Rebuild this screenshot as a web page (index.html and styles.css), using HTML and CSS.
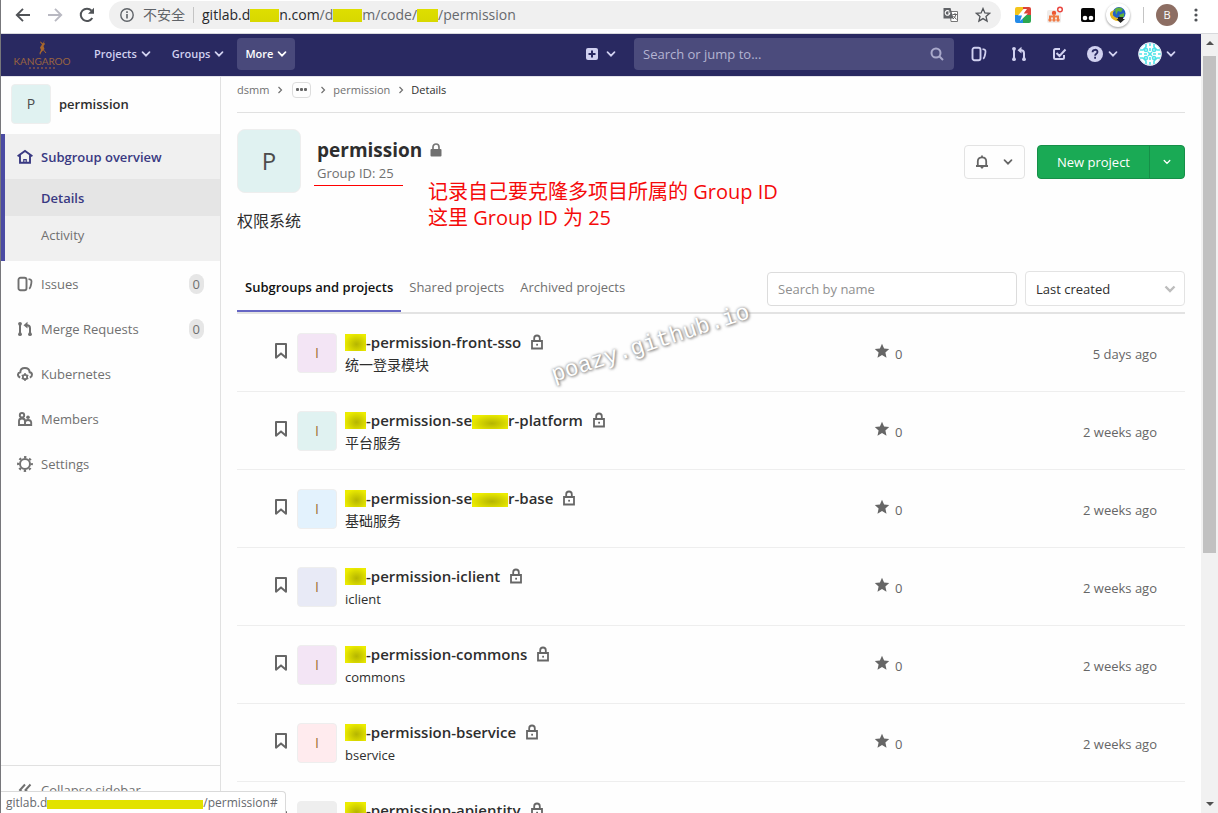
FILE: index.html
```html
<!DOCTYPE html>
<html lang="en">
<head>
<meta charset="utf-8">
<title>permission</title>
<link rel="stylesheet" href="styles.css">
</head>
<body>
<svg class="defs" aria-hidden="true">
  <symbol id="chev" viewBox="0 0 10 10"><path d="M1.5 3.2 5 6.7l3.5-3.5" fill="none" stroke="currentColor" stroke-width="1.7" stroke-linecap="round"/></symbol>
  <symbol id="sep" viewBox="0 0 8 8"><path d="M2.5 1l3 3-3 3" fill="none" stroke="currentColor" stroke-width="1.2"/></symbol>
  <symbol id="issues" viewBox="0 0 16 16"><rect x="1.5" y="1.8" width="8" height="12.4" rx="2" fill="none" stroke="currentColor" stroke-width="1.9"/><path d="M11.5 3.2c3 .3 3.4 1 2.8 4.2-.5 3-.9 4.6-2.2 5.4" fill="none" stroke="currentColor" stroke-width="1.8"/></symbol>
  <symbol id="merge" viewBox="0 0 16 16"><path d="M3 4v8M13 12V7.2Q13 4.2 10 4.200H8.500" fill="none" stroke="currentColor" stroke-width="2"/><circle cx="3" cy="2.800" r="1.900" fill="currentColor"/><circle cx="3" cy="13.200" r="1.900" fill="currentColor"/><circle cx="13" cy="13.200" r="1.900" fill="currentColor"/><path d="M6.500 4.200 10.500.800v6.800z" fill="currentColor"/></symbol>
  <symbol id="lock" viewBox="0 0 16 16"><path d="M3 7h10v7.500H3zM5.200 7V4.300a2.800 2.800 0 0 1 5.600 0V7" fill="none" stroke="currentColor" stroke-width="1.800"/><rect x="7.200" y="9.800" width="1.800" height="1.800" fill="currentColor"/></symbol>
  <symbol id="mark" viewBox="0 0 16 16"><path d="M3 1.100h10v13.600L8 10.400l-5 4.300z" fill="none" stroke="currentColor" stroke-width="2" stroke-linejoin="round"/></symbol>
  <symbol id="star" viewBox="0 0 16 16"><path d="M8 .8l2.100 4.700 5.100.500-3.800 3.500 1.100 5.200L8 12.100l-4.500 2.600 1.100-5.200L.8 6l5.100-.5z" fill="currentColor"/></symbol>
</svg>

<div class="browser">
  <header class="chrome">
    <button class="cbtn" aria-label="Back"><svg width="16" height="16" viewBox="0 0 16 16"><path d="M15 8H2M8 1.800 1.800 8 8 14.200" fill="none" stroke="#505357" stroke-width="1.900"/></svg></button>
    <button class="cbtn" aria-label="Forward"><svg width="16" height="16" viewBox="0 0 16 16"><path d="M1 8h13M8 1.800 14.200 8 8 14.200" fill="none" stroke="#b9b9c2" stroke-width="1.900"/></svg></button>
    <button class="cbtn" aria-label="Reload"><svg width="16" height="16" viewBox="0 0 16 16"><path d="M13.300 11A6.200 6.200 0 1 1 12.600 3.700" fill="none" stroke="#505357" stroke-width="2"/><path d="M15 .8v6H9z" fill="#505357"/></svg></button>
    <div class="address">
      <svg width="14" height="14" viewBox="0 0 14 14"><circle cx="7" cy="7" r="6.200" fill="none" stroke="#5f6368" stroke-width="1.400"/><path d="M7 6v4.500M7 3.300v1.600" stroke="#5f6368" stroke-width="1.600"/></svg>
      <span class="insecure">不安全</span><i class="divider"></i>
      <span class="url"><b>gitlab.d<i class="redact w28"></i>n.com</b>/d<i class="redact w28"></i>m/code/<i class="redact w20"></i>/permission</span>
      <button class="cbtn" aria-label="Translate"><svg width="16" height="16" viewBox="0 0 16 16"><path d="M7 4.500h7.500v10H8z" fill="#fff" stroke="#777" /><path d="M.5 1h7l3 10.500H.5z" fill="#606266"/><path d="M6.300 4.500A2.300 2.300 0 1 0 6.800 6H5" fill="none" stroke="#fff" stroke-width="1.100"/><path d="M9.500 7.500h4.500M12 6v1.500M13 7.500q-.8 3-3 4.500M10.500 9l3 3.500" fill="none" stroke="#666"/></svg></button>
      <button class="cbtn" aria-label="Bookmark"><svg width="16" height="16" viewBox="0 0 16 16"><path d="M8 1.500l1.900 4.400 4.700.4-3.600 3.100 1.100 4.700L8 11.600l-4.100 2.500L5 9.400 1.400 6.300l4.700-.4z" fill="none" stroke="#54575b" stroke-width="1.300"/></svg></button>
    </div>
    <div class="extensions">
      <svg width="16" height="16" viewBox="0 0 16 16"><path d="M2 0h6v8H0V2q0-2 2-2z" fill="#f4c51c"/><path d="M8 0h6q2 0 2 2v6H8z" fill="#dd4338"/><path d="M0 8h8v8H2q-2 0-2-2z" fill="#258be8"/><path d="M8 8h8v6q0 2-2 2H8z" fill="#2ca750"/><path d="M8.500 2 3 8.500h4L5 14l8-7.500H8.700L12 2z" fill="#fff"/></svg>
      <svg width="18" height="18" viewBox="0 0 18 18"><rect y="4" width="14" height="13" rx="2" fill="#f0ecea"/><circle cx="7" cy="7" r="2.200" fill="#ec5633"/><path d="M7 8v6M3 14v-3.500h8V14" stroke="#f07a45" stroke-width="2" fill="none"/><circle cx="3" cy="14" r="1.700" fill="#f07a45"/><circle cx="7" cy="14" r="1.700" fill="#f07a45"/><circle cx="11" cy="14" r="1.700" fill="#f07a45"/><circle cx="13" cy="3.500" r="2.300" fill="#fff" stroke="#ea4640" stroke-width="1.500"/></svg>
      <svg width="14" height="14" viewBox="0 0 14 14"><rect width="14" height="14" rx="2" fill="#050505"/><circle cx="4" cy="10" r="2.300" fill="#fff"/><circle cx="10" cy="10" r="2.300" fill="#fff"/></svg>
      <svg class="globe" width="26" height="26" viewBox="0 0 26 26"><circle cx="13" cy="13" r="12" fill="#fff"/><circle cx="14" cy="11.500" r="6.500" fill="#235fc6"/><path d="M10 7q4-3 8 0l-2 3-3-1-2 4zM14 13l5-2q1 4-3 6z" fill="#61b33b"/><path d="M5 13q-1-4 5-5-5 4 0 7 3 2 5 0l1 4q-9 1-11-6z" fill="#e6b722"/><path d="M13 15h5v2h2l-4.500 4-4-4H13z" fill="#222"/></svg>
      <i class="divider"></i><span class="profile">B</span>
      <button class="cbtn" aria-label="Menu"><svg width="4" height="14" viewBox="0 0 4 14"><circle cx="2" cy="2" r="1.600" fill="#505357"/><circle cx="2" cy="7" r="1.600" fill="#505357"/><circle cx="2" cy="12" r="1.600" fill="#505357"/></svg></button>
    </div>
  </header>

  <div class="viewport">
    <div class="page">
      <nav class="navbar">
        <a class="logo" href="#" aria-label="Kangaroo">
          <svg width="10" height="15" viewBox="0 0 10 15"><path d="M7.500 0 7 2.500 8 4 6.500 6l1 3-3 3L3 15l-.5-2L4 10 3 7.500l2-3L3 2l.5-.5L6 3.500z" fill="#a8672c"/><path d="M6.500 10 9 13" stroke="#a8672c" stroke-width="1" fill="none"/></svg>
          <span>KANGAROO</span><i></i>
        </a>
        <button class="navitem">Projects <svg class="c10"><use href="#chev"/></svg></button>
        <button class="navitem">Groups <svg class="c10"><use href="#chev"/></svg></button>
        <button class="navitem on">More <svg class="c10"><use href="#chev"/></svg></button>
        <div class="navright">
          <button class="navicon plus" aria-label="New"><svg width="12" height="12" viewBox="0 0 12 12"><rect width="12" height="12" rx="2" fill="currentColor"/><path d="M6 2.500v7M2.500 6h7" stroke="#292961" stroke-width="2"/></svg><svg class="c10"><use href="#chev"/></svg></button>
          <label class="jump"><input type="text" placeholder="Search or jump to..." aria-label="Search or jump to"><svg width="14" height="14" viewBox="0 0 14 14"><circle cx="6" cy="6" r="4.500" fill="none" stroke="currentColor" stroke-width="2"/><path d="M9.500 9.500l3.500 3.500" stroke="currentColor" stroke-width="2"/></svg></label>
          <button class="navicon" aria-label="Issues"><svg class="c16"><use href="#issues"/></svg></button>
          <button class="navicon" aria-label="Merge requests"><svg class="c16"><use href="#merge"/></svg></button>
          <button class="navicon" aria-label="To-do"><svg class="c16" viewBox="0 0 16 16"><path d="M9 3H4.500Q3 3 3 4.500v7Q3 13 4.500 13h7q1.500 0 1.500-1.500V9M5.500 7l3 3 6-6.500" fill="none" stroke="currentColor" stroke-width="2"/></svg></button>
          <button class="navicon help" aria-label="Help"><svg class="c16" viewBox="0 0 16 16"><circle cx="8" cy="8" r="8" fill="currentColor"/><path d="M5.500 6.200C5.700 3 10.500 3 10.500 6c0 1.800-2.400 1.700-2.400 3.700M8.100 10.800v2" fill="none" stroke="#292961" stroke-width="1.800"/></svg><svg class="c10"><use href="#chev"/></svg></button>
          <button class="navicon user" aria-label="Account"><svg width="24" height="24" viewBox="0 0 24 24"><circle cx="12" cy="12" r="11.500" fill="#fff"/><g fill="none" stroke="#4fe3e8" stroke-width="1.600"><path d="M8 2v3l-3 3H2M16 2v3l3 3h3M8 22v-3l-3-3H2M16 22v-3l3-3h3M12 1v3M12 20v3M1 12h3M20 12h3"/><circle cx="8" cy="8" r="1.500"/><circle cx="16" cy="8" r="1.500"/><circle cx="8" cy="16" r="1.500"/><circle cx="16" cy="16" r="1.500"/><path d="M12 6v3M12 15v3M6 12h3M15 12h3M10 10l4 4M14 10l-4 4"/></g><circle cx="12" cy="12" r="11.300" fill="none" stroke="#d6e4f2"/></svg><svg class="c10"><use href="#chev"/></svg></button>
        </div>
      </nav>

      <div class="body">
        <aside class="sidebar">
          <a class="context" href="#"><span class="avatar teal">P</span><strong>permission</strong></a>
          <div class="current">
            <a class="side top" href="#"><svg class="c16" viewBox="0 0 16 16"><path d="M.6 7.200 8 2l7.400 5.200M3 6v7.800h10V6" fill="none" stroke="currentColor" stroke-width="1.900"/><path d="M6.800 14v-3.300h2.400V14" fill="none" stroke="currentColor" stroke-width="1.200"/></svg>Subgroup overview</a>
            <a class="sub on" href="#">Details</a>
            <a class="sub" href="#">Activity</a>
          </div>
          <a class="side" href="#"><svg class="c16"><use href="#issues"/></svg>Issues<span class="count">0</span></a>
          <a class="side" href="#"><svg class="c16"><use href="#merge"/></svg>Merge Requests<span class="count">0</span></a>
          <a class="side" href="#"><svg class="c16" viewBox="0 0 16 16"><path d="M3.200 11.500C.2 10.500.2 6.800 3.300 6.300 3.500.8 12 .6 12.700 6.300c3 .3 3 4.200.1 5.200" fill="none" stroke="currentColor" stroke-width="2"/><circle cx="8" cy="11" r="2.200" fill="none" stroke="currentColor" stroke-width="1.800"/><path d="M8 7v2M8 13v2M4.700 9l1.500 1M9.800 12l1.500 1M4.700 13l1.500-1M9.800 10l1.500-1" stroke="currentColor" stroke-width="1.500"/></svg>Kubernetes</a>
          <a class="side" href="#"><svg class="c16" viewBox="0 0 16 16"><path d="M2 14V10q0-2.500 3-2.500T8 10v4zM8 14v-2.500Q8 9 11 9t3.200 2.500V14z" fill="none" stroke="currentColor" stroke-width="1.900"/><circle cx="5" cy="4.200" r="2.200" fill="none" stroke="currentColor" stroke-width="1.900"/><circle cx="11" cy="6.200" r="1.800" fill="currentColor"/></svg>Members</a>
          <a class="side" href="#"><svg class="c16" viewBox="0 0 16 16"><circle cx="8" cy="8" r="5" fill="none" stroke="currentColor" stroke-width="2"/><circle cx="8" cy="8" r="6.900" fill="none" stroke="currentColor" stroke-width="2" stroke-dasharray="2.400 3.020" stroke-dashoffset="1.200"/></svg>Settings</a>
          <button class="collapse"><svg class="c16" viewBox="0 0 16 16"><path d="M8 2.500 3 8l5 5.500M13.500 2.500 8.500 8l5 5.500" fill="none" stroke="currentColor" stroke-width="2"/></svg>Collapse sidebar</button>
        </aside>

        <main class="main">
          <nav class="crumbs"><a href="#">dsmm</a><svg class="c8"><use href="#sep"/></svg><button class="dots" aria-label="More levels"><i></i><i></i><i></i></button><svg class="c8"><use href="#sep"/></svg><a href="#">permission</a><svg class="c8"><use href="#sep"/></svg><a class="here" href="#">Details</a></nav>
          <section class="group">
            <span class="avatar big teal">P</span>
            <div class="title">
              <h1>permission <svg width="12" height="14" viewBox="0 0 12 14"><path d="M3 7V4a3 3 0 0 1 6 0v3" fill="none" stroke="#777" stroke-width="1.700"/><rect x=".5" y="6" width="11" height="7.500" rx="1" fill="#707070"/></svg></h1>
              <p>Group ID: 25</p>
            </div>
            <div class="note">记录自己要克隆多项目所属的 Group ID<br>这里 Group ID 为 25</div>
            <div class="actions">
              <button class="bell" aria-label="Notifications"><svg width="14" height="14" viewBox="0 0 14 14"><path d="M1 11h12M2.800 11V6.200C2.800 1 11.200 1 11.200 6.200V11M7 .5v2" fill="none" stroke="currentColor" stroke-width="1.800"/><path d="M5.200 12h3.600L7 14z" fill="currentColor"/></svg><svg class="c10"><use href="#chev"/></svg></button>
              <div class="split"><button>New project</button><button class="drop" aria-label="More actions"><svg class="c8"><use href="#chev"/></svg></button></div>
            </div>
          </section>
          <p class="about">权限系统</p>
          <div class="tabs">
            <a class="on" href="#">Subgroups and projects</a><a href="#">Shared projects</a><a href="#">Archived projects</a>
            <div class="filters">
              <input type="text" placeholder="Search by name" aria-label="Search by name">
              <div class="select"><select aria-label="Sort"><option>Last created</option></select><svg width="12" height="12" viewBox="0 0 12 12"><path d="M1.500 3.500 6 8l4.500-4.500" fill="none" stroke="#bdbdbd" stroke-width="2.400"/></svg></div>
            </div>
          </div>
          <ul class="projects">
            <li><svg class="c16"><use href="#mark"/></svg><span class="avatar purple">I</span><div class="info"><h2><i class="redact w20 dark"></i>-permission-front-sso<svg class="c16"><use href="#lock"/></svg></h2><p class="cjk">统一登录模块</p></div><div class="stats"><span><svg class="c16"><use href="#star"/></svg>0</span><time>5 days ago</time></div></li>
            <li><svg class="c16"><use href="#mark"/></svg><span class="avatar teal">I</span><div class="info"><h2><i class="redact w20 dark"></i>-permission-se<i class="redact w36 dark"></i>r-platform<svg class="c16"><use href="#lock"/></svg></h2><p class="cjk">平台服务</p></div><div class="stats"><span><svg class="c16"><use href="#star"/></svg>0</span><time>2 weeks ago</time></div></li>
            <li><svg class="c16"><use href="#mark"/></svg><span class="avatar blue">I</span><div class="info"><h2><i class="redact w20 dark"></i>-permission-se<i class="redact w36 dark"></i>r-base<svg class="c16"><use href="#lock"/></svg></h2><p class="cjk">基础服务</p></div><div class="stats"><span><svg class="c16"><use href="#star"/></svg>0</span><time>2 weeks ago</time></div></li>
            <li><svg class="c16"><use href="#mark"/></svg><span class="avatar indigo">I</span><div class="info"><h2><i class="redact w20 dark"></i>-permission-iclient<svg class="c16"><use href="#lock"/></svg></h2><p>iclient</p></div><div class="stats"><span><svg class="c16"><use href="#star"/></svg>0</span><time>2 weeks ago</time></div></li>
            <li><svg class="c16"><use href="#mark"/></svg><span class="avatar purple">I</span><div class="info"><h2><i class="redact w20 dark"></i>-permission-commons<svg class="c16"><use href="#lock"/></svg></h2><p>commons</p></div><div class="stats"><span><svg class="c16"><use href="#star"/></svg>0</span><time>2 weeks ago</time></div></li>
            <li><svg class="c16"><use href="#mark"/></svg><span class="avatar pink">I</span><div class="info"><h2><i class="redact w20 dark"></i>-permission-bservice<svg class="c16"><use href="#lock"/></svg></h2><p>bservice</p></div><div class="stats"><span><svg class="c16"><use href="#star"/></svg>0</span><time>2 weeks ago</time></div></li>
            <li><svg class="c16"><use href="#mark"/></svg><span class="avatar grey"></span><div class="info"><h2><i class="redact w20 dark"></i>-permission-apientity<svg class="c16"><use href="#lock"/></svg></h2></div></li>
          </ul>
        </main>
      </div>
    </div>
    <div class="scrollbar"><i class="up"></i><i class="thumb"></i><i class="down"></i></div>
  </div>
  <div class="watermark">poazy.github.io</div>
  <div class="status">gitlab.d<i class="redact w156"></i>/permission#</div>
</div>
</body>
</html>
```
FILE: styles.css
```css
* { box-sizing: border-box; }
body { margin: 0; font: 13px/20px "Open Sans", "Noto Sans CJK SC", sans-serif; color: #2e2e2e; background: #fefefe; }
button, input, select { font: inherit; color: inherit; margin: 0; }
button { border: 0; background: none; padding: 0; }
a { color: inherit; text-decoration: none; }
h1, h2, p, ul { margin: 0; padding: 0; }
svg { flex: none; display: block; }
.defs { position: absolute; width: 0; height: 0; }
.c8 { width: 8px; height: 8px; }
.c10 { width: 10px; height: 10px; }
.c16 { width: 16px; height: 16px; }

.redact { display: inline-block; height: 13px; background: linear-gradient(#dede00, #d8d800); vertical-align: -2px; }
.redact.dark { height: 17px; background: radial-gradient(ellipse at 55% 60%, #b5b500, #ecec00 75%); }
.w20 { width: 21px; }
.w28 { width: 29px; }
.w36 { width: 36px; }
.redact.w36 { height: 14px; margin-top: 3px; }
.w156 { width: 156px; height: 9px; background: #e2e200; }

.browser { position: relative; display: flex; flex-direction: column; height: 100vh; overflow: hidden; border-left: 1px solid #77777b; }
.divider { width: 1px; height: 16px; background: #c4c4c4; }

.chrome { display: flex; align-items: center; flex: none; height: 34px; padding: 0 20px 3px 14px; border-bottom: 1px solid #d8d9dc; background: #fff; }
.chrome > .cbtn { margin-right: 16px; }
.address { flex: 1; display: flex; align-items: center; height: 28px; margin-left: -2px; padding: 0 10px 0 11px; border-radius: 14px; background: #f0f0f0; }
.insecure { margin: 0 8px 0 9px; font-size: 14px; color: #5f6368; }
.url { flex: 1; margin-left: 8px; font-size: 14px; color: #66696d; white-space: nowrap; }
.url b { font-weight: 400; color: #26282b; }
.address .cbtn { margin-left: 16px; }
.extensions { display: flex; align-items: center; gap: 16px; margin-left: 14px; }
.globe { margin: 0 -4px 0 -6px; filter: drop-shadow(0 1px 1px #999); }
.profile { width: 22px; height: 22px; margin-left: -4px; border-radius: 50%; background: #8d6e63; color: #fff; font-size: 11px; line-height: 22px; text-align: center; }

.viewport { flex: 1; display: flex; min-height: 0; }
.page { flex: 1; display: flex; flex-direction: column; min-width: 0; }
.scrollbar { flex: none; display: flex; flex-direction: column; width: 17px; padding: 7px 2px; background: #f1f1f1; }
.up, .down { align-self: center; border: 4px solid transparent; border-top: 0; border-bottom: 4px solid #505050; }
.down { margin-top: auto; border-bottom: 0; border-top: 4px solid #505050; }
.thumb { height: 65%; margin-top: 11px; background: #c1c1c1; }

.navbar { flex: none; display: flex; align-items: center; height: 42px; padding: 0 25px 2px 14px; background: #292961; color: #d1d1f0; }
.logo { display: flex; flex-direction: column; align-items: center; width: 54px; margin-right: 17px; color: #9a6440; font: 10px/12px Lato, sans-serif; }
.logo i { width: 26px; border-top: 2px dotted #6b4850; }
.navitem { display: flex; align-items: center; gap: 4px; height: 32px; margin-right: 5px; padding: 0 8px; border-radius: 4px; font-weight: 600; font-size: 11px; }
.navitem.on { background: #49497b; color: #fff; }
.navright { display: flex; align-items: center; margin-left: auto; }
.navicon { display: flex; align-items: center; gap: 8px; margin-right: 24px; }
.navicon.plus { margin-right: 18px; }
.navicon.help { margin-right: 20px; gap: 5px; margin-left: -4px; }
.navicon.user { margin-right: 0; gap: 4px; }
.jump { display: flex; align-items: center; width: 320px; height: 32px; margin-right: 17px; padding: 0 10px 0 9px; border-radius: 4px; background: #4b4b7c; color: #a9a9cb; }
.jump input { flex: 1; min-width: 0; padding: 0; border: 0; background: none; outline: 0; font-size: 13px; }
.jump input::placeholder { color: #b4b4d2; }

.body { flex: 1; display: flex; min-height: 0; border-top: 1px solid #e3e3ea; }
.sidebar { flex: none; display: flex; flex-direction: column; width: 220px; border-right: 1px solid #e1e1e1; color: #707070; }
.context { display: flex; align-items: center; gap: 8px; padding: 7px 10px 10px; color: #2e2e2e; }
.context strong { font-weight: 600; }
.avatar { flex: none; display: flex; align-items: center; justify-content: center; width: 40px; height: 40px; border: 1px solid #eee; border-radius: 4px; color: #4c4c4c; font-size: 14px; }
.avatar.big { width: 64px; height: 64px; border-radius: 8px; font-size: 24px; }
.teal { background: #e0f2f1; }
.purple { background: #f3e5f5; }
.blue { background: #e3f2fd; }
.indigo { background: #e8eaf6; }
.pink { background: #ffebee; }
.grey { background: #eee; }
.current { padding-bottom: 8px; border-left: 4px solid #4b4ba3; background: #f0f0f0; }
.side { display: flex; align-items: center; gap: 8px; height: 45px; padding: 0 16px; }
.top { padding-left: 12px; color: #393982; font-weight: 600; }
.sub { display: block; padding: 9px 36px 8px; }
.sub.on { background: #e5e5e5; color: #393982; font-weight: 600; }
.count { margin-left: auto; padding: 0 4px; border-radius: 10px; background: #e6e6e6; }
.collapse { display: flex; align-items: center; gap: 8px; height: 48px; margin-top: auto; padding: 0 16px; border-top: 1px solid #e1e1e1; text-align: left; }

.main { flex: 1; min-width: 0; padding: 0 16px; overflow: hidden; }
.crumbs { display: flex; align-items: center; gap: 6px; height: 36px; padding-bottom: 10px; border-bottom: 1px solid #e1e1e1; color: #707070; font-size: 11px; }
.crumbs a:first-child { margin-right: 1px; }
.crumbs .dots { margin: 0 2px; }
.crumbs a { margin: 0 1px 0 0; }
.here { color: #2e2e2e; }
.dots { display: flex; align-items: center; justify-content: center; gap: 1px; width: 19px; height: 16px; border: 1px solid #ddd; border-radius: 4px; }
.dots i { width: 3px; height: 3px; border-radius: 1px; background: #666; }
.group { position: relative; display: flex; gap: 16px; padding-top: 16px; }
.title { padding-top: 8px; }
.title h1 { display: flex; align-items: center; gap: 8px; font-size: 19px; line-height: 26px; }
.title p { color: #707070; }
.title::after { content: ""; display: block; width: 89px; border-top: 1px solid #f00; margin: 2px 0 0 -3px; }
.note { position: absolute; top: 66px; left: 191px; color: #f50a0a; font-size: 20px; line-height: 26px; white-space: nowrap; }
.actions { display: flex; gap: 12px; align-self: flex-start; margin: 16px 0 0 auto; }
.bell { display: flex; align-items: center; justify-content: center; gap: 14px; width: 61px; height: 34px; border: 1px solid #e3e3e3; border-radius: 4px; color: #666; }
.split { display: flex; height: 34px; border: 1px solid #168f48; border-radius: 4px; background: #1aaa55; color: #fff; font-size: 13px; }
.split button { padding: 0 19px; }
.split .drop { padding: 0 13px; border-left: 1px solid #168f48; }
.about { padding-top: 16px; font-size: 16px; line-height: 24px; }
.tabs { display: flex; align-items: stretch; height: 47px; margin-top: 34px; border-bottom: 2px solid #e3e3e3; color: #707070; }
.tabs > a { height: 45px; padding: 10px 8px 0; line-height: 20px; }
.tabs > a.on { color: #111; font-weight: 600; border-bottom: 2px solid #6666c4; }
.filters { display: flex; gap: 8px; margin-left: auto; }
.filters input { width: 250px; height: 34px; margin-top: 5px; padding: 0 10px; border: 1px solid #dcdcdc; border-radius: 4px; background: #fff; }
.filters input::placeholder { color: #8f8f8f; }
.select { position: relative; margin-top: 4px; }
.select select { width: 160px; height: 35px; padding: 0 10px; border: 1px solid #e3e3e3; border-radius: 4px; background: #fff; color: #2e2e2e; appearance: none; }
.select svg { position: absolute; right: 9px; top: 12px; }

.projects { list-style: none; }
.projects li { display: flex; gap: 8px; height: 78px; padding: 19px 28px 0 36px; border-bottom: 1px solid #eee; color: #666; }
.projects li > .c16 { margin-top: 10px; }
.projects .avatar { color: #a07038; }
.info { flex: 1; color: #2e2e2e; }
.info h2 { display: flex; align-items: center; font-size: 15px; font-weight: 600; line-height: 18px; }
.info h2 .c16 { margin-left: 8px; color: #666; }
.info p { margin-top: 4px; }
.info .cjk { font-size: 14px; }
.stats { display: flex; justify-content: space-between; width: 283px; padding-top: 11px; }
.stats span { display: flex; gap: 5px; }
.stats .c16 { margin-top: -1px; }

.watermark { position: absolute; left: 546px; top: 326px; color: #fff; font: 23px/36px "Liberation Mono", monospace; text-shadow: 1px 1px 3px #777, 0 0 3px #999; transform: rotate(-18deg); }
.status { position: absolute; left: 0; bottom: 0; height: 22px; padding: 0 7px 0 5px; border: 1px solid #dadada; border-left: 0; border-bottom: 0; border-radius: 0 4px 0 0; background: #fff; color: #66696d; font-size: 12px; line-height: 22px; }
```
